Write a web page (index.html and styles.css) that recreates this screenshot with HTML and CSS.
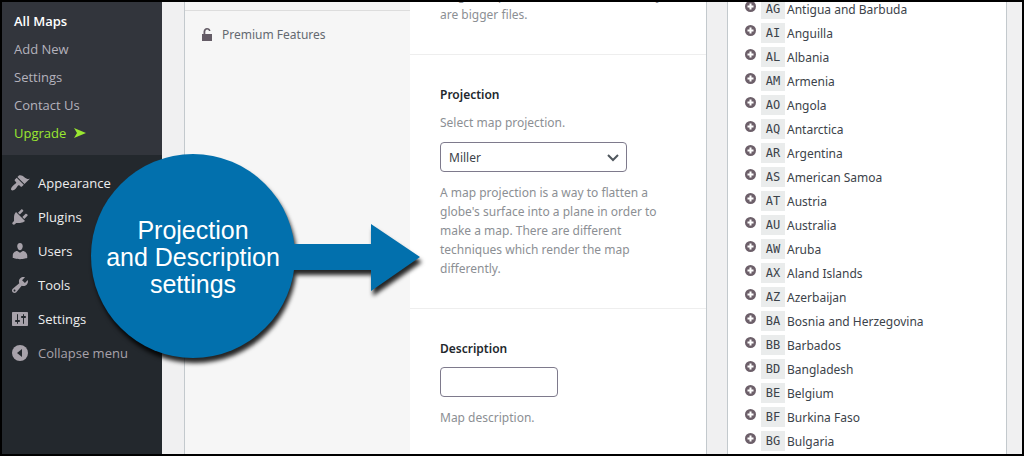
FILE: index.html
```
<!DOCTYPE html>
<html lang="en">
<head>
  <meta charset="utf-8">
  <title>Map Settings</title>
  <link rel="stylesheet" href="styles.css">
</head>
<body>

  <div class="frame">
    <nav class="sidebar">
      <ul class="submenu">
        <li><a href="#" class="current">All Maps</a></li>
        <li><a href="#">Add New</a></li>
        <li><a href="#">Settings</a></li>
        <li><a href="#">Contact Us</a></li>
        <li><a href="#" class="upgrade">Upgrade
          <svg width="12" height="10" viewBox="0 0 12 10"><path d="M0 0L12 5L0 10L3 5Z"/></svg></a></li>
      </ul>
      <ul class="menu">
        <li><a href="#">
          <svg width="20" height="20" viewBox="0 0 20 20"><path d="M14.48 11.06L7.41 3.99l1.5-1.5c.5-.56 2.3-.47 3.51.32 1.21.8 1.43 1.28 2.91 2.1 1.18.64 2.45 1.26 4.45.85zm-.71.71L6.7 4.7 4.93 6.47c-.39.39-.39 1.02 0 1.41l1.06 1.06c.39.39.39 1.03 0 1.42-.6.6-1.43 1.11-2.21 1.69-.35.26-.7.53-1.01.84C1.43 14.23.4 16.08 1.4 17.07c.99 1 2.84-.03 4.18-1.36.31-.31.58-.66.85-1.02.57-.78 1.08-1.61 1.69-2.21.39-.39 1.02-.39 1.41 0l1.06 1.06c.39.39 1.02.39 1.41 0z"/></svg>
          Appearance</a></li>
        <li><a href="#">
          <svg width="20" height="20" viewBox="0 0 20 20"><path d="M13.11 4.36L9.87 7.6 8 5.73l3.24-3.24c.35-.34 1.05-.2 1.56.32.52.51.66 1.21.31 1.55zm-8 1.77l.91-1.12 9.01 9.01-1.19.84c-.71.71-2.63 1.16-3.82 1.16H6.14L4.9 17.26c-.59.59-1.54.59-2.12 0-.59-.58-.59-1.53 0-2.12l1.24-1.24v-3.88c0-1.13.4-3.19 1.09-3.89zm7.26 3.97l3.24-3.24c.34-.35 1.04-.21 1.55.31.52.51.66 1.21.31 1.55l-3.24 3.25z"/></svg>
          Plugins</a></li>
        <li><a href="#">
          <svg width="20" height="20" viewBox="0 0 20 20"><path d="M10 9.25c-2.27 0-2.73-3.44-2.73-3.44C7 4.02 7.82 2 9.97 2c2.16 0 2.98 2.02 2.71 3.81 0 0-.41 3.44-2.68 3.44zm0 2.57L12.72 10c2.39 0 4.52 2.33 4.52 4.53v2.49s-3.65 1.13-7.24 1.13c-3.65 0-7.24-1.13-7.24-1.13v-2.49c0-2.25 1.94-4.48 4.47-4.48z"/></svg>
          Users</a></li>
        <li><a href="#">
          <svg width="20" height="20" viewBox="0 0 20 20"><path d="M16.68 9.77c-1.34 1.34-3.3 1.67-4.95.99l-5.41 6.52c-.99.99-2.59.99-3.58 0s-.99-2.59 0-3.57l6.52-5.42c-.68-1.65-.35-3.61.99-4.95 1.28-1.28 3.12-1.62 4.72-1.06l-2.89 2.89 2.82 2.82 2.86-2.87c.53 1.58.18 3.39-1.08 4.65zM3.81 16.21c.4.39 1.04.39 1.43 0 .4-.4.4-1.04 0-1.43-.39-.4-1.03-.4-1.43 0-.39.39-.39 1.03 0 1.43z"/></svg>
          Tools</a></li>
        <li><a href="#">
          <svg width="20" height="20" viewBox="0 0 20 20"><path fill-rule="evenodd" d="M18 16V4c0-.55-.45-1-1-1H3c-.55 0-1 .45-1 1v12c0 .55.45 1 1 1h14c.55 0 1-.45 1-1zM8 11h1c.55 0 1 .45 1 1s-.45 1-1 1H8v1.5c0 .28-.22.5-.5.5s-.5-.22-.5-.5V13H6c-.55 0-1-.45-1-1s.45-1 1-1h1V5.5c0-.28.22-.5.5-.5s.5.22.5.5V11zm5-2h-1c-.55 0-1-.45-1-1s.45-1 1-1h1V5.5c0-.28.22-.5.5-.5s.5.22.5.5V7h1c.55 0 1 .45 1 1s-.45 1-1 1h-1v5.5c0 .28-.22.5-.5.5s-.5-.22-.5-.5V9z"/></svg>
          Settings</a></li>
      </ul>
      <button type="button" class="collapse">
        <svg width="20" height="20" viewBox="0 0 20 20"><circle cx="10" cy="10" r="8"/><path class="cut" d="M12 6v8l-5-4z"/></svg>
        Collapse menu
      </button>
    </nav>

    <main class="content">
      <section class="postbox">
        <div class="tabs">
          <a href="#" class="tab">
            <svg width="10" height="13" viewBox="0 0 10 13"><path d="M0 6h1.500V3.500Q2 0 5 0t3.500 3H7Q6.800 1.500 5.200 1.500T3.300 3.500V6H10v7H0z"/></svg>
            Premium Features
          </a>
        </div>
        <div class="fields">
          <div class="field quality">
            <p>Larger maps have more detail, but they<br>are bigger files.</p>
          </div>
          <div class="field">
            <label for="projection">Projection</label>
            <p class="hint">Select map projection.</p>
            <div class="select">
              <select id="projection">
                <option>Miller</option>
                <option>Mercator</option>
                <option>Robinson</option>
              </select>
              <svg width="12" height="8" viewBox="0 0 12 8"><path d="M1 1l5 5 5-5" fill="none" stroke="#50575e" stroke-width="2"/></svg>
            </div>
            <p>A map projection is a way to flatten a globe's surface into a plane in order to make a map. There are different techniques which render the map differently.</p>
          </div>
          <div class="field">
            <label for="description">Description</label>
            <input type="text" id="description">
            <p>Map description.</p>
          </div>
        </div>
      </section>

      <aside class="regions">
        <ul id="regionList"></ul>
      </aside>
    </main>

    <div class="callout">
      <svg width="340" height="220" viewBox="0 0 340 220">
        <circle cx="104" cy="104" r="102"/>
        <path d="M200 92H282V72L331 105L282 139V118H200z"/>
      </svg>
      <p>Projection<br>and Description<br>settings</p>
    </div>
  </div>

  <script>
    const regions = [
      ["AG", "Antigua and Barbuda"],
      ["AI", "Anguilla"],
      ["AL", "Albania"],
      ["AM", "Armenia"],
      ["AO", "Angola"],
      ["AQ", "Antarctica"],
      ["AR", "Argentina"],
      ["AS", "American Samoa"],
      ["AT", "Austria"],
      ["AU", "Australia"],
      ["AW", "Aruba"],
      ["AX", "Aland Islands"],
      ["AZ", "Azerbaijan"],
      ["BA", "Bosnia and Herzegovina"],
      ["BB", "Barbados"],
      ["BD", "Bangladesh"],
      ["BE", "Belgium"],
      ["BF", "Burkina Faso"],
      ["BG", "Bulgaria"]
    ];
    const list = document.getElementById("regionList");

    regions.forEach(([code, name]) => {
      const row = document.createElement("li");
      row.innerHTML = `
        <button type="button" aria-label="Add ${name}">
          <svg width="11" height="11" viewBox="0 0 11 11"><circle cx="5.5" cy="5.5" r="5.5"/><path d="M5.5 2.500v6M2.500 5.500h6"/></svg>
        </button>
        <code>${code}</code>
        <span>${name}</span>
      `;
      list.appendChild(row);
    });
  </script>

</body>
</html>
```
FILE: styles.css
```
* {
  box-sizing: border-box;
}
body {
  margin: 0;
  font-family: "Open Sans", "Noto Sans", sans-serif;
  font-size: 13px;
  color: #3c434a;
}
ul {
  list-style: none;
  margin: 0;
  padding: 0;
}
p {
  margin: 0;
}
a {
  text-decoration: none;
}
.frame {
  position: relative;
  display: flex;
  height: 100vh;
  overflow: hidden;
  border: 2px solid #000;
  background: #f0f0f1;
}

/* Admin menu */
.sidebar {
  width: 160px;
  flex-shrink: 0;
  background: #23282d;
}
.submenu {
  padding: 5px 0 8px;
  background: #32353c;
}
.submenu a {
  display: flex;
  align-items: center;
  gap: 8px;
  height: 28px;
  padding-left: 12px;
  color: #b4b2bd;
}
.submenu .current {
  color: #fff;
  font-weight: 600;
}
.submenu .upgrade {
  color: #9ae830;
}
.submenu svg {
  fill: #9ae830;
}
.menu {
  padding-top: 11px;
}
.menu a,
.collapse {
  display: flex;
  align-items: center;
  gap: 8px;
  width: 100%;
  height: 34px;
  padding: 0 0 0 8px;
  font-size: 13px;
  color: #eee;
}
.menu svg,
.collapse svg {
  fill: #a7a2aa;
}
.sidebar .cut {
  fill: #23282d;
}
.collapse {
  border: 0;
  background: none;
  font-family: inherit;
  color: #a7a2aa;
}

/* Map settings */
.content {
  display: flex;
  flex: 1;
  gap: 20px;
  padding: 0 15px 0 22px;
  font-family: "Noto Sans", "Open Sans", sans-serif;
  font-size: 12px;
}
.postbox {
  display: flex;
  flex: 1;
  border: solid #c3c9cd;
  border-width: 0 1px;
  background: #fff;
}
.tabs {
  width: 225px;
  flex-shrink: 0;
  background: #f6f6f6;
}
.tab {
  display: flex;
  align-items: center;
  gap: 10px;
  height: 48px;
  margin-top: 8px;
  padding-left: 17px;
  border-top: 1px solid #ddd;
  color: #646970;
}
.tab svg {
  fill: #645c66;
}
.fields {
  flex: 1;
}
.field {
  padding: 30px;
  border-bottom: 1px solid #eee;
  line-height: 19px;
  color: #8c8f94;
}
.field:last-child {
  border-bottom: 0;
}
.quality {
  margin-top: -16px;
  padding-top: 0;
}
.field label {
  display: block;
  margin-bottom: 9px;
  font-weight: 600;
  color: #23282d;
}
.hint {
  margin-bottom: 10px;
}
.select {
  position: relative;
  width: 187px;
  margin-bottom: 11px;
}
.select svg {
  position: absolute;
  top: 12px;
  right: 8px;
  pointer-events: none;
}
.select select,
.field input {
  display: block;
  height: 30px;
  padding: 0 8px;
  border: 1px solid #7e7a8c;
  border-radius: 4px;
  background: #fff;
  font: inherit;
  color: #3c434a;
}
.select select {
  width: 100%;
  appearance: none;
}
.field input {
  width: 118px;
  margin-bottom: 11px;
}

/* Region codes */
.regions {
  width: 280px;
  border: solid #c3c9cd;
  border-width: 0 1px;
  background: #fff;
}
.regions ul {
  margin-top: -5px;
  padding-left: 17px;
}
.regions li {
  display: flex;
  align-items: center;
  height: 24px;
}
.regions button {
  width: 11px;
  height: 18px;
  margin-right: 5px;
  padding: 0 0 6px;
  border: 0;
  background: none;
}
.regions svg {
  display: block;
  fill: #6c5f69;
  stroke: #fff;
  stroke-width: 2;
}
.regions circle {
  stroke: none;
}
.regions code {
  width: 24px;
  margin-right: 2px;
  background: #eaecec;
  font-family: "DejaVu Sans Mono", monospace;
  font-size: 12px;
  line-height: 20px;
  text-align: center;
}

/* Callout over the page */
.callout {
  position: absolute;
  top: 150px;
  left: 87px;
}
.callout svg {
  display: block;
  fill: #0270ad;
  filter: drop-shadow(2px 5px 2px rgba(0,0,0,0.85));
}
.callout p {
  position: absolute;
  top: 65px;
  left: 2px;
  width: 204px;
  font-family: "Liberation Sans", Arial, sans-serif;
  font-size: 25px;
  line-height: 27px;
  text-align: center;
  color: #fff;
}
```
